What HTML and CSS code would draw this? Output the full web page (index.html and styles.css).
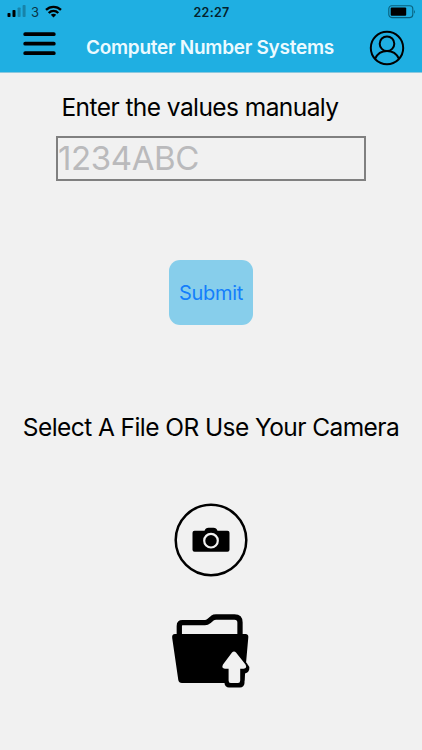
FILE: index.html
```html
<!DOCTYPE html>
<html lang="en">
<head>
    <meta charset="UTF-8">
    <meta name="viewport" content="width=device-width, initial-scale=1.0">
    <title>Computer Number Systems</title>
    <link rel="stylesheet" href="styles.css">
</head>
<body>
    <header class="header">
        <div class="status-bar">
            <div class="status-left">
                <svg class="signal" viewBox="0 0 19 12">
                    <rect x="0.5" y="8" width="3" height="4" rx="0.8"/>
                    <rect x="5.5" y="5" width="3" height="7" rx="0.8"/>
                    <rect x="10.6" y="2.5" width="3" height="9.5" rx="0.8" opacity="0.25"/>
                    <rect x="15.6" y="0" width="3" height="12" rx="0.8" opacity="0.25"/>
                </svg>
                <span class="carrier">3</span>
                <svg class="wifi" viewBox="0 0 17 13">
                    <g fill="none" stroke="#000" stroke-width="2.3">
                        <path d="M1 4.9C5.2.8 11.8.8 16 4.9"/>
                        <path d="M3.7 8C6.5 5.3 10.5 5.3 13.3 8"/>
                    </g>
                    <path d="M8.5 12.4L5.8 9.8C7.3 8.4 9.7 8.4 11.2 9.8Z"/>
                </svg>
            </div>
            <span class="time">22:27</span>
            <svg class="battery" viewBox="0 0 28 14">
                <rect x="0.8" y="0.8" width="24" height="11.8" rx="3" fill="none" stroke="#08607c" stroke-width="1.1"/>
                <rect x="2.7" y="2.4" width="15.5" height="8.4" rx="1"/>
                <path d="M26 4.7Q27.8 6.7 26 8.7Z" fill="#08607c"/>
            </svg>
        </div>
        <nav class="nav-bar">
            <svg class="menu-icon" viewBox="0 0 33 24">
                <path d="M2.2 2.2H30.8M2.2 11.7H30.8M2.2 21.2H30.8" stroke="#000" stroke-width="3.8" stroke-linecap="round"/>
            </svg>
            <h1 class="title">Computer Number Systems</h1>
            <svg class="user-icon" viewBox="0 0 36 36" fill="none" stroke="#000" stroke-width="2">
                <circle cx="18" cy="18" r="16.2"/>
                <circle cx="18" cy="13.7" r="7.3"/>
                <path d="M6 28.8C8.3 23.8 12.6 21 18 21S27.7 23.8 30 28.8"/>
            </svg>
        </nav>
    </header>

    <main class="content">
        <label class="heading" for="value">Enter the values manualy</label>
        <input class="value-input" id="value" type="text" placeholder="1234ABC">
        <button class="submit" type="button">Submit</button>
        <p class="heading heading-select">Select A File OR Use Your Camera</p>
        <svg class="camera-icon" viewBox="0 0 74 74">
            <circle cx="37" cy="37" r="35.3" fill="none" stroke="#000" stroke-width="2.5"/>
            <path d="M20.5 27.7H30.5Q31.5 24.7 34.5 24.7H39.5Q42.5 24.7 43.5 27.7H53.5Q55.5 27.7 55.5 29.7V46.7Q55.5 48.7 53.5 48.7H20.5Q18.5 48.7 18.5 46.7V29.7Q18.500 27.700 20.500 27.700Z"/>
            <circle cx="37" cy="37.7" r="6.8" fill="none" stroke="#f1f1f1" stroke-width="2.2"/>
        </svg>
        <svg class="folder-icon" viewBox="0 0 80 76">
            <path d="M8.3 23V13Q8.3 9.700 11.500 9.700H34Q36 9.700 38 8L41.500 5Q43 4 45 4H63.500Q69 4 69 9.500V23" fill="none" stroke="#000" stroke-width="5.3"/>
            <path d="M4 21H74.500Q77.700 21 77.300 24.500L73.500 67Q73 70 70 70H11Q7.800 70 7.300 67L1.200 25Q0.700 21 4 21Z"/>
            <path d="M63 42L73 54Q75 56 72.500 56H69V70H58V56H54Q51.500 56 53.500 54Z" stroke="#000" stroke-width="9" stroke-linejoin="round"/>
            <path class="arrow" d="M61 39.500Q63 37.700 65 39.500L74.500 51.500Q76.500 55.500 72.500 55.700H69.200V67.500Q69.200 70 67 70H59.700Q57.600 70 57.600 67.500V55.700H54Q50 55.500 52 51.500Z"/>
        </svg>
    </main>
</body>
</html>
```
FILE: styles.css
```css
* {
    box-sizing: border-box;
}

body {
    margin: 0;
    min-height: 750px;
    background: #f1f1f1;
    color: #000;
    font-family: Inter, "Liberation Sans", sans-serif;
}

svg {
    display: block;
    flex-shrink: 0;
}

.header {
    height: 73px;
    background: #1fafe2;
    border-bottom: 1px solid #8cc8de;
}

.status-bar {
    display: grid;
    grid-template-columns: 1fr auto 1fr;
    align-items: center;
    height: 24px;
    padding: 0 6px 0 7px;
}

.status-left {
    display: flex;
    align-items: center;
}

.signal {
    width: 19px;
    height: 12px;
    margin-top: -2px;
}

.carrier {
    margin-left: 5px;
    width: 14px;
    font-size: 13px;
    color: #0a3444;
}

.wifi {
    width: 17px;
    height: 13px;
    margin-top: -1px;
}

.time {
    font-size: 12.5px;
    font-weight: 600;
    letter-spacing: 0.3px;
    color: #04212c;
}

.battery {
    width: 28px;
    height: 14px;
    margin-top: -1px;
    justify-self: end;
}

.nav-bar {
    display: flex;
    align-items: center;
    height: 47px;
    padding: 0 17px 0 23px;
}

.menu-icon {
    width: 33px;
    height: 24px;
    margin-top: -8px;
}

.title {
    margin: 1px 0 0 30px;
    font-size: 19px;
    font-weight: 600;
    line-height: 24px;
    letter-spacing: -0.27px;
    white-space: nowrap;
    color: #ecfaff;
}

.user-icon {
    width: 36px;
    height: 36px;
    margin-left: auto;
}

.content {
    display: flex;
    flex-direction: column;
    align-items: center;
    padding-top: 19px;
}

.heading {
    margin: 0 22px 0 0;
    font-size: 24.5px;
    line-height: 30px;
    letter-spacing: -0.57px;
    white-space: nowrap;
}

.value-input {
    width: 310px;
    height: 45px;
    margin-top: 14px;
    padding: 0 0 2px;
    border: 2px solid #808080;
    border-radius: 0;
    background: transparent;
    font-family: inherit;
    font-size: 33px;
    letter-spacing: -0.4px;
}

.value-input::placeholder {
    color: #bababc;
    opacity: 1;
}

.submit {
    width: 84px;
    height: 65px;
    margin-top: 79px;
    padding: 0;
    border: 0;
    border-radius: 11px;
    background: #87ceeb;
    color: #147efb;
    font-family: inherit;
    font-size: 20px;
    letter-spacing: -0.3px;
}

.heading-select {
    margin: 87px 0 0;
}

.camera-icon {
    width: 74px;
    height: 74px;
    margin-top: 61px;
}

.folder-icon {
    width: 80px;
    height: 76px;
    margin-top: 36px;
}

.arrow {
    fill: #f1f1f1;
}
```
